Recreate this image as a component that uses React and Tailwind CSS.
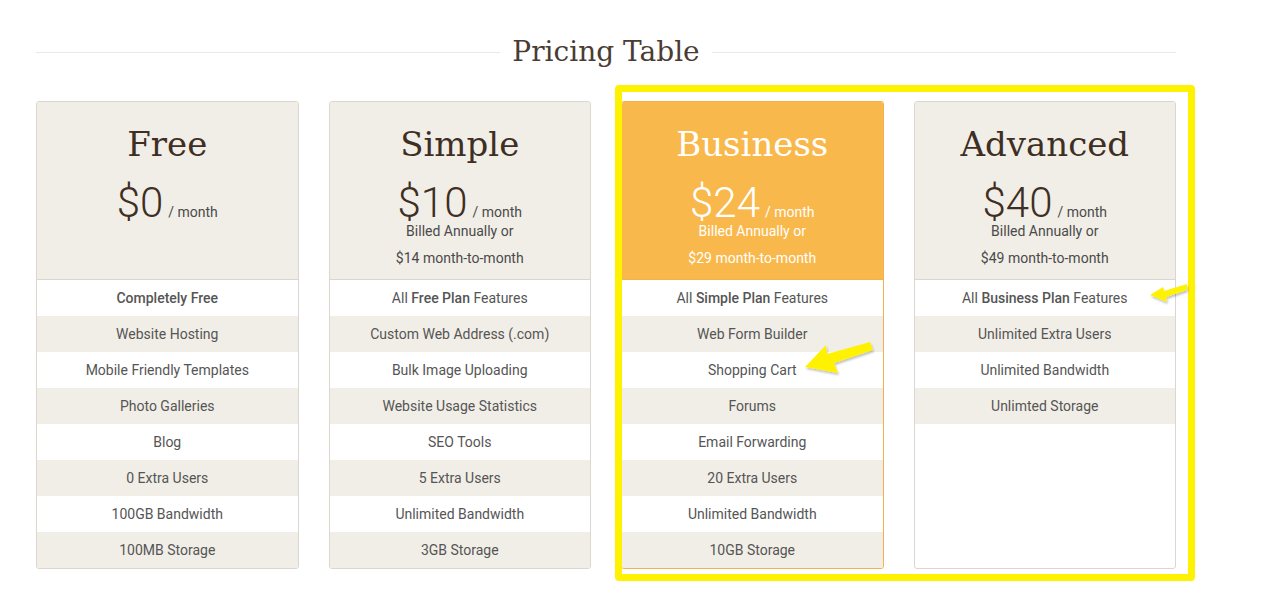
const plans = [
  {
    name: 'Free',
    price: '$0',
    billed: null,
    features: [
      <b className="font-medium">Completely Free</b>,
      'Website Hosting',
      'Mobile Friendly Templates',
      'Photo Galleries',
      'Blog',
      '0 Extra Users',
      '100GB Bandwidth',
      '100MB Storage',
    ],
  },
  {
    name: 'Simple',
    price: '$10',
    billed: '$14 month-to-month',
    features: [
      <>All <b className="font-medium">Free Plan</b> Features</>,
      'Custom Web Address (.com)',
      'Bulk Image Uploading',
      'Website Usage Statistics',
      'SEO Tools',
      '5 Extra Users',
      'Unlimited Bandwidth',
      '3GB Storage',
    ],
  },
  {
    name: 'Business',
    price: '$24',
    billed: '$29 month-to-month',
    featured: true,
    features: [
      <>All <b className="font-medium">Simple Plan</b> Features</>,
      'Web Form Builder',
      'Shopping Cart',
      'Forums',
      'Email Forwarding',
      '20 Extra Users',
      'Unlimited Bandwidth',
      '10GB Storage',
    ],
  },
  {
    name: 'Advanced',
    price: '$40',
    billed: '$49 month-to-month',
    features: [
      <>All <b className="font-medium">Business Plan</b> Features</>,
      'Unlimited Extra Users',
      'Unlimited Bandwidth',
      'Unlimted Storage',
    ],
  },
]

function PlanCard({ plan }) {
  const featured = plan.featured
  return (
    <div
      className={
        'flex flex-col rounded-[3px] border overflow-hidden h-[468px] bg-white ' +
        (featured ? 'border-[#f3b24c]' : 'border-[#dcd6ce]')
      }
    >
      <div
        className={
          'h-[178px] shrink-0 border-b flex flex-col items-center pt-[20px] ' +
          (featured
            ? 'bg-[#f9b84b] border-[#f3b24c] text-white'
            : 'bg-[#f1eee7] border-[#dcd6ce] text-[#3f2e23]')
        }
      >
        <h2 className="text-[34px] leading-[44px] font-['DejaVu_Serif',serif]">{plan.name}</h2>
        <div className="mt-[19px] h-[36px] flex items-baseline">
          <span className="text-[42px] leading-[36px] font-light">{plan.price}</span>
          <span className={'ml-[5px] text-[14px] leading-none ' + (featured ? 'text-white' : 'text-[#4a4a4a]')}>/ month</span>
        </div>
        {plan.billed && (
          <div className={'text-[14px] text-center ' + (featured ? 'text-white' : 'text-[#4a4a4a]')}>
            <p className="leading-[20px]">Billed Annually or</p>
            <p className="leading-[34px]">{plan.billed}</p>
          </div>
        )}
      </div>
      <ul className="flex-1">
        {plan.features.map((f, i) => (
          <li
            key={i}
            className={
              'h-9 leading-9 text-center text-[14px] text-[#555] ' +
              (i % 2 === 1 ? 'bg-[#f1eee7]' : 'bg-white')
            }
          >
            {f}
          </li>
        ))}
      </ul>
    </div>
  )
}

export default function App() {
  return (
    <div className="relative w-[1266px] h-[589px] bg-white font-['Roboto',sans-serif] overflow-hidden">
      <div className="w-[1140px] ml-[36px] pt-[34px]">
        <div className="flex items-center">
          <div className="flex-1 h-px bg-[#ece8e2]"></div>
          <h1 className="px-[12px] text-[28px] leading-[36px] text-[#4b3c33] font-['DejaVu_Serif',serif]">
            Pricing Table
          </h1>
          <div className="flex-1 h-px bg-[#ece8e2]"></div>
        </div>
        <div className="mt-[31px] grid grid-cols-4 gap-[30px]">
          {plans.map(p => (
            <PlanCard key={p.name} plan={p} />
          ))}
        </div>
      </div>

      {/* highlight annotation */}
      <div className="absolute left-[615px] top-[85px] w-[580px] h-[496px] border-[7px] border-[#fff200] rounded-[4px] pointer-events-none"></div>
      <svg className="absolute left-0 top-0 pointer-events-none" width="1266" height="589">
        <defs>
          <filter id="sh" x="-20%" y="-20%" width="140%" height="160%">
            <feDropShadow dx="1" dy="2" stdDeviation="1.2" floodColor="#000" floodOpacity="0.25" />
          </filter>
        </defs>
        <polygon
          filter="url(#sh)"
          fill="#fff200"
          points="805,367 826,345 827,354 870,342 873,350 834,363 838,373"
        />
        <polygon
          filter="url(#sh)"
          fill="#fff200"
          points="1150,295 1163,287 1164,291 1187,284 1187,290 1166,297 1167,302"
        />
      </svg>
    </div>
  )
}
